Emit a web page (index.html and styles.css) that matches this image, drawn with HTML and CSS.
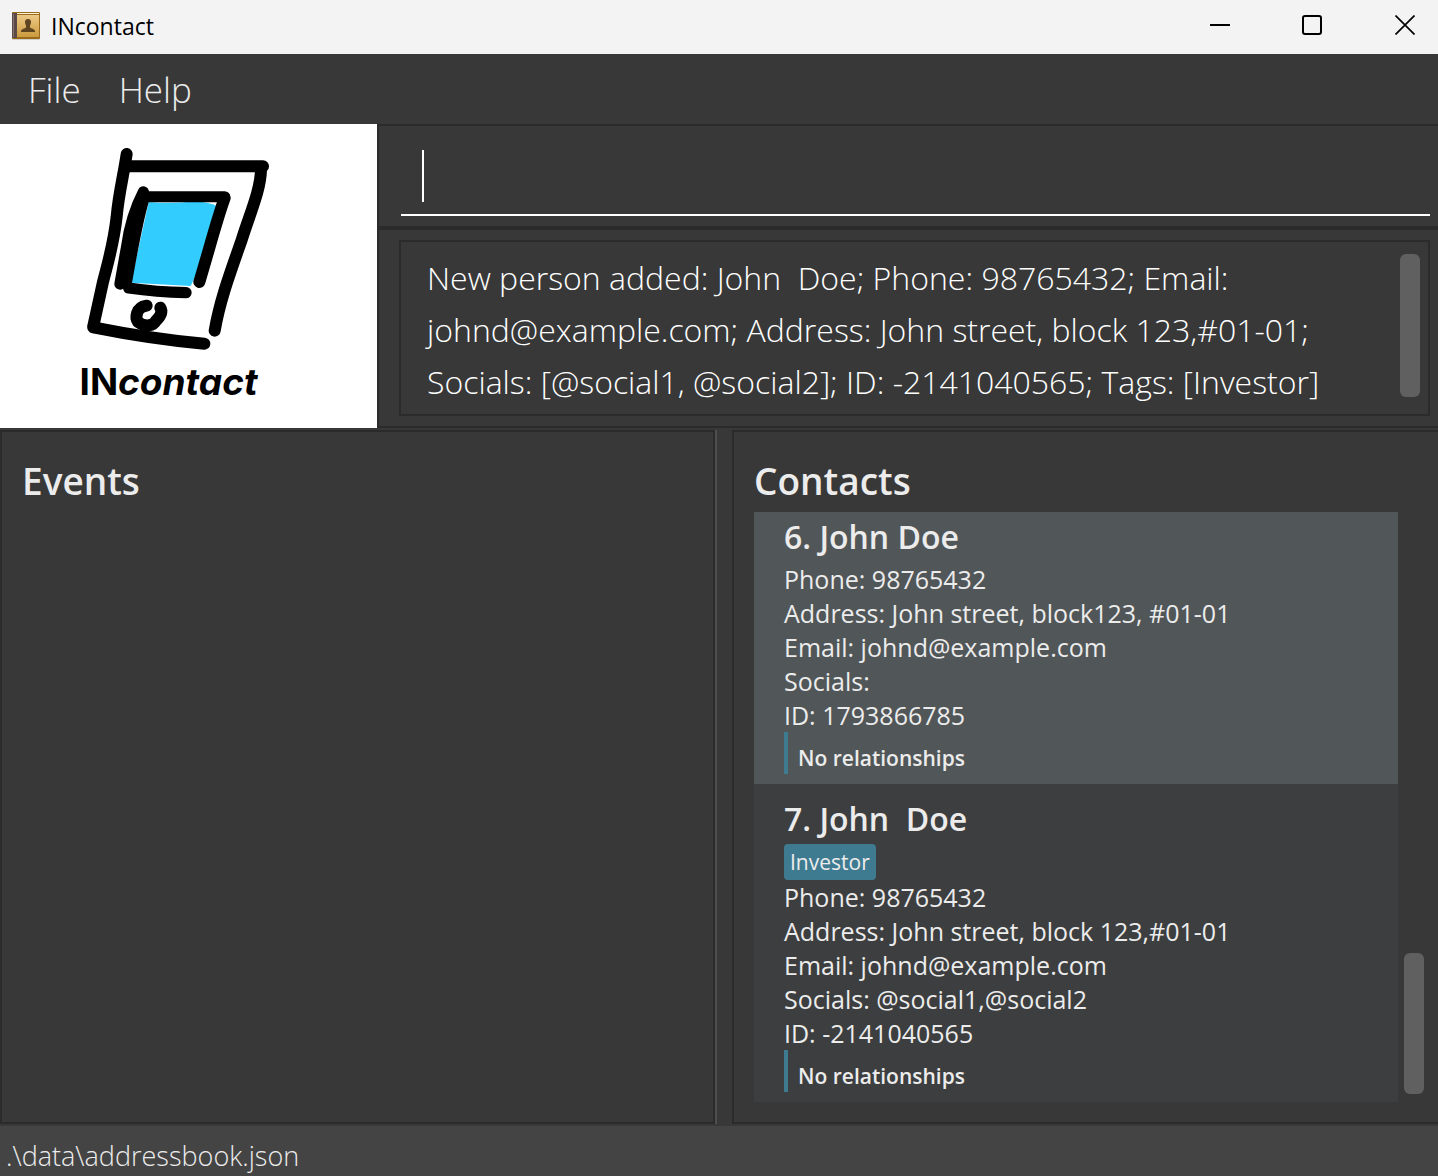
FILE: index.html
```html
<!DOCTYPE html>
<html lang="en">
<head>
<meta charset="utf-8">
<meta name="viewport" content="width=device-width, initial-scale=1">
<title>INcontact</title>
<link rel="stylesheet" href="styles.css">
</head>
<body>
<div class="window">
  <header class="titlebar">
    <svg class="app-icon" viewBox="0 0 30 30" aria-hidden="true">
      <defs>
        <linearGradient id="cover" x1="0" y1="0" x2="0" y2="1">
          <stop offset="0" stop-color="#edc987"/>
          <stop offset="1" stop-color="#cc9a3e"/>
        </linearGradient>
      </defs>
      <rect x="1" y="27" width="28" height="2" rx="1" fill="#cfcfcf"/>
      <rect x="1" y="1" width="28" height="27" rx="1" fill="#9a6a1b"/>
      <rect x="5" y="2" width="23" height="1" fill="#fff3d6"/>
      <rect x="5" y="4" width="23" height="22" fill="url(#cover)"/>
      <rect x="1" y="2" width="5" height="25" fill="#5b4a48"/>
      <rect x="2" y="3" width="1" height="23" fill="#85736e"/>
      <path d="M17 8c-2 0-3 1-3 3 0 1.500.5 2.500 1 3.500v2c-1 1-4.500 1.300-5 3.500v1h14v-1c-.5-2.200-4-2.500-5-3.500v-2c.5-1 1-2 1-3.500 0-2-1-3-3-3z" fill="#5e4520"/>
    </svg>
    <h1 class="app-title">INcontact</h1>
    <div class="window-controls">
      <button class="window-button" type="button" aria-label="Minimize">
        <svg viewBox="0 0 20 20"><path d="M0 10h20" stroke-width="2"/></svg>
      </button>
      <button class="window-button" type="button" aria-label="Maximize">
        <svg viewBox="0 0 20 20"><rect x="1" y="1" width="18" height="18" rx="2" stroke-width="2"/></svg>
      </button>
      <button class="window-button" type="button" aria-label="Close">
        <svg viewBox="0 0 20 20"><path d="M.5.5l19 19M19.500.5l-19 19" stroke-width="1.700"/></svg>
      </button>
    </div>
  </header>

  <nav class="menubar" aria-label="Main">
    <button class="menu" type="button">File</button>
    <button class="menu" type="button">Help</button>
  </nav>

  <section class="top">
    <div class="logo">
      <svg class="logo-art" viewBox="66 48 570 618" aria-hidden="true">
        <path d="M266 216Q340 222 400 214Q450 216 474 230L424 400L392 468L213 458Z" fill="#33ccff"/>
        <g fill="none" stroke="#000" stroke-linecap="round" stroke-linejoin="round">
          <path d="M200 72C190 140 176 190 170 260C160 350 140 410 128 460L100 588" stroke-width="36"/>
          <path d="M206 109H609" stroke-width="36"/>
          <path d="M603 118C602 180 570 250 545 330C510 430 480 510 464 602" stroke-width="36"/>
          <path d="M100 592C200 612 330 632 433 641" stroke-width="36"/>
          <path d="M250 186C222 240 208 290 200 350L180 462" stroke-width="34"/>
          <path d="M246 210C226 280 212 360 196 452" stroke-width="42"/>
          <path d="M256 200H494" stroke-width="33"/>
          <path d="M494 204C470 270 450 350 418 456" stroke-width="36"/>
          <path d="M206 474Q290 486 378 488" stroke-width="34"/>
          <path d="M260 527C226 532 226 565 234 576C256 592 280 588 288 572C304 556 308 545 301 533" stroke-width="36"/>
        </g>
      </svg>
      <p class="logo-name">IN<em>contact</em></p>
    </div>
    <div class="console">
      <div class="command">
        <input class="command-input" type="text" aria-label="Command">
        <span class="caret"></span>
      </div>
      <div class="result">
        <div class="result-box">
          <textarea class="result-text" aria-label="Result" rows="3" readonly>New person added: John  Doe; Phone: 98765432; Email: johnd@example.com; Address: John street, block 123,#01-01; Socials: [@social1, @social2]; ID: -2141040565; Tags: [Investor]</textarea>
          <div class="thumb result-thumb"></div>
        </div>
      </div>
    </div>
  </section>

  <main class="panes">
    <section class="pane">
      <h2 class="pane-title">Events</h2>
    </section>
    <div class="divider"></div>
    <section class="pane contacts">
      <h2 class="pane-title">Contacts</h2>
      <div class="list-area">
        <ul class="list">
          <li class="card even">
            <h3 class="name">6. John Doe</h3>
            <p>Phone: 98765432</p>
            <p>Address: John street, block123, #01-01</p>
            <p>Email: johnd@example.com</p>
            <p>Socials:</p>
            <p>ID: 1793866785</p>
            <p class="relations">No relationships</p>
          </li>
          <li class="card">
            <h3 class="name">7. John  Doe</h3>
            <span class="tag">Investor</span>
            <p>Phone: 98765432</p>
            <p>Address: John street, block 123,#01-01</p>
            <p>Email: johnd@example.com</p>
            <p>Socials: @social1,@social2</p>
            <p>ID: -2141040565</p>
            <p class="relations">No relationships</p>
          </li>
        </ul>
        <div class="thumb list-thumb"></div>
      </div>
    </section>
  </main>

  <footer class="status">.\data\addressbook.json</footer>
</div>
</body>
</html>
```
FILE: styles.css
```css
* { box-sizing: border-box; }

body, h1, h2, h3, p, ul { margin: 0; padding: 0; }

body {
  background: #383838;
  color: #ececec;
  font-family: "Open Sans", "Noto Sans", sans-serif;
}

button, input, textarea {
  margin: 0;
  border: 0;
  background: transparent;
  color: inherit;
  font: inherit;
}

.window {
  display: flex;
  flex-direction: column;
  height: 100vh;
}

.titlebar {
  display: flex;
  align-items: center;
  height: 54px;
  padding: 0 0 2px 11px;
  background: #f3f3f3;
  color: #000;
}

.app-icon { width: 30px; height: 30px; }

.app-title {
  margin-left: 10px;
  font-size: 23px;
  font-weight: 400;
}

.window-controls {
  display: flex;
  align-self: flex-start;
  margin-left: auto;
}

.window-button {
  width: 92px;
  height: 50px;
  padding: 0;
}

.window-button:last-child { width: 80px; padding-left: 14px; }

.window-button svg {
  display: block;
  width: 20px;
  height: 20px;
  margin: 0 auto;
  fill: none;
  stroke: #000;
}

.menubar {
  display: flex;
  gap: 38px;
  height: 70px;
  padding: 0 28px;
}

.menu {
  padding: 0;
  font-size: 35px;
  font-weight: 300;
}

.top { display: flex; height: 304px; }

.logo {
  display: flex;
  flex-direction: column;
  align-items: center;
  flex: 0 0 377px;
  padding: 22px 40px 0 0;
  background: #fff;
  color: #000;
}

.logo-art { width: 190px; height: 206px; margin-left: 16px; }

.logo-name {
  margin-top: 8px;
  font-family: Inter, sans-serif;
  font-size: 37px;
  font-weight: 700;
  line-height: 44px;
}

.console {
  display: flex;
  flex: 1;
  flex-direction: column;
  min-width: 0;
}

.command {
  position: relative;
  flex: none;
  height: 104px;
  padding: 14px 8px 10px 22px;
  border: 2px solid #2b2b2b;
  border-right: 0;
}

.command-input {
  display: block;
  width: 100%;
  height: 76px;
  padding: 0 22px;
  border-bottom: 2px solid #fff;
  outline: 0;
  color: #fff;
  font-size: 32px;
  font-weight: 300;
}

.caret {
  position: absolute;
  top: 24px;
  left: 43px;
  width: 2px;
  height: 52px;
  background: #fff;
}

.result {
  display: flex;
  flex: 1;
  min-height: 0;
  padding: 10px 8px 10px 20px;
  border: 2px solid #2b2b2b;
  border-right: 0;
}

.result-box {
  display: flex;
  flex: 1;
  align-items: flex-start;
  padding: 10px 8px 0 20px;
  border: 2px solid #2b2b2b;
}

.result-text {
  flex: 1;
  min-width: 0;
  height: 160px;
  padding: 0 24px 0 6px;
  overflow: hidden;
  outline: 0;
  resize: none;
  color: #fff;
  font-size: 32px;
  font-weight: 300;
  line-height: 52px;
}

.thumb {
  flex: none;
  width: 20px;
  border-radius: 6px;
  background: #606060;
}

.result-thumb { height: 143px; margin-top: 2px; }

.panes {
  display: grid;
  flex: 1;
  grid-template-columns: 715fr 17px 706fr;
  min-height: 0;
  padding: 2px 0;
}

.pane {
  display: flex;
  flex-direction: column;
  min-width: 0;
  min-height: 0;
  padding: 22px 12px 20px 20px;
  border: 2px solid #2b2b2b;
}

.contacts { border-right: 0; }

.divider { border-left: 2px solid #4e4e4e; }

.pane-title {
  margin-bottom: 4px;
  font-size: 37px;
  font-weight: 600;
  line-height: 54px;
}

.list-area {
  display: flex;
  flex: 1;
  align-items: flex-end;
  gap: 6px;
  min-height: 0;
}

.list {
  display: flex;
  flex: 1;
  flex-direction: column;
  justify-content: flex-end;
  height: 100%;
  overflow: hidden;
  list-style: none;
}

.list-thumb { height: 141px; margin: 0 2px 8px 0; }

.card {
  flex: none;
  padding: 14px 30px 10px;
  background: #3c3e3f;
  font-size: 25px;
  line-height: 34px;
}

.even { background: #515658; }

.name {
  margin-bottom: 4px;
  font-size: 32px;
  font-weight: 600;
  line-height: 42px;
  white-space: pre;
}

.tag {
  display: block;
  width: max-content;
  padding: 0 6px;
  border-radius: 4px;
  background: #3e7b91;
  font-size: 21px;
  font-weight: 500;
  line-height: 36px;
}

.relations {
  padding: 10px 0 0 10px;
  border-left: 4px solid #3e7b91;
  font-size: 21px;
  font-weight: 600;
  line-height: 32px;
}

.status {
  height: 50px;
  padding: 4px 6px;
  background: #444;
  font-size: 27px;
  font-weight: 300;
  line-height: 52px;
}
```
